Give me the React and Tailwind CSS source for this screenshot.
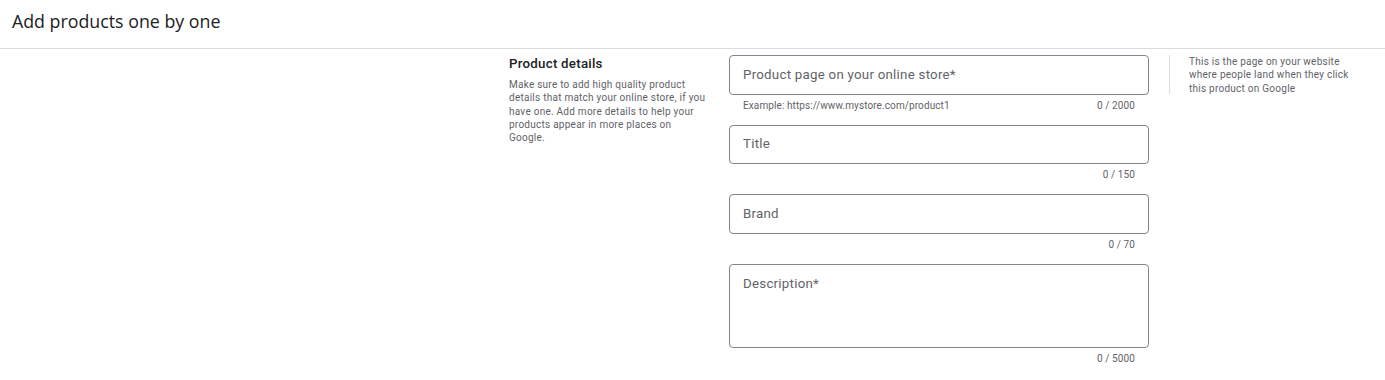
import React from "react";

function Field({ label, counter, helper, tall }) {
  return (
    <div className="flex flex-col">
      <div
        className={`w-[420px] rounded-[4px] border border-[#80868b] px-[13px] ${
          tall ? "h-[84px] pt-[6px]" : "h-[39.5px] flex items-center"
        }`}
      >
        <span className="text-[13.3px] leading-[16px] tracking-[0.25px] text-[#5f6368]">{label}</span>
      </div>
      <div className="flex h-[30px] w-[420px] justify-between px-[14px] pt-[4px] text-[10px] leading-[13px] tracking-[0.1px] text-[#5f6368]">
        <span>{helper || ""}</span>
        <span>{counter}</span>
      </div>
    </div>
  );
}

export default function App() {
  return (
    <div className="min-h-[380px] bg-white font-['Roboto',sans-serif]">
      <div className="h-[49px] border-b border-[#dadce0] pl-[12px] pt-[9px]">
        <h1 className="font-['Open_Sans',sans-serif] text-[17.8px] leading-[24px] text-[#202124]">
          Add products one by one
        </h1>
      </div>
      <div className="flex pl-[509px] pt-[6px]">
        <div className="w-[220px] pr-[20px] pt-[1px]">
          <h2 className="text-[13.3px] font-medium leading-[16px] tracking-[0.25px] text-[#202124]">
            Product details
          </h2>
          <p className="mt-[6px] w-[200px] text-[10px] leading-[13.33px] tracking-[0.25px] text-[#5f6368]">
            Make sure to add high quality product details that match your online store, if you have one. Add more
            details to help your products appear in more places on Google.
          </p>
        </div>
        <div className="flex flex-col">
          <Field
            label="Product page on your online store*"
            helper="Example: https://www.mystore.com/product1"
            counter="0 / 2000"
          />
          <Field label="Title" counter="0 / 150" />
          <Field label="Brand" counter="0 / 70" />
          <Field label="Description*" counter="0 / 5000" tall />
        </div>
        <div className="ml-[20px] h-[39px] border-l border-[#dadce0] pl-[19px]">
          <p className="w-[170px] text-[10px] leading-[13.33px] tracking-[0.25px] text-[#5f6368]">
            This is the page on your website where people land when they click this product on Google
          </p>
        </div>
      </div>
    </div>
  );
}
